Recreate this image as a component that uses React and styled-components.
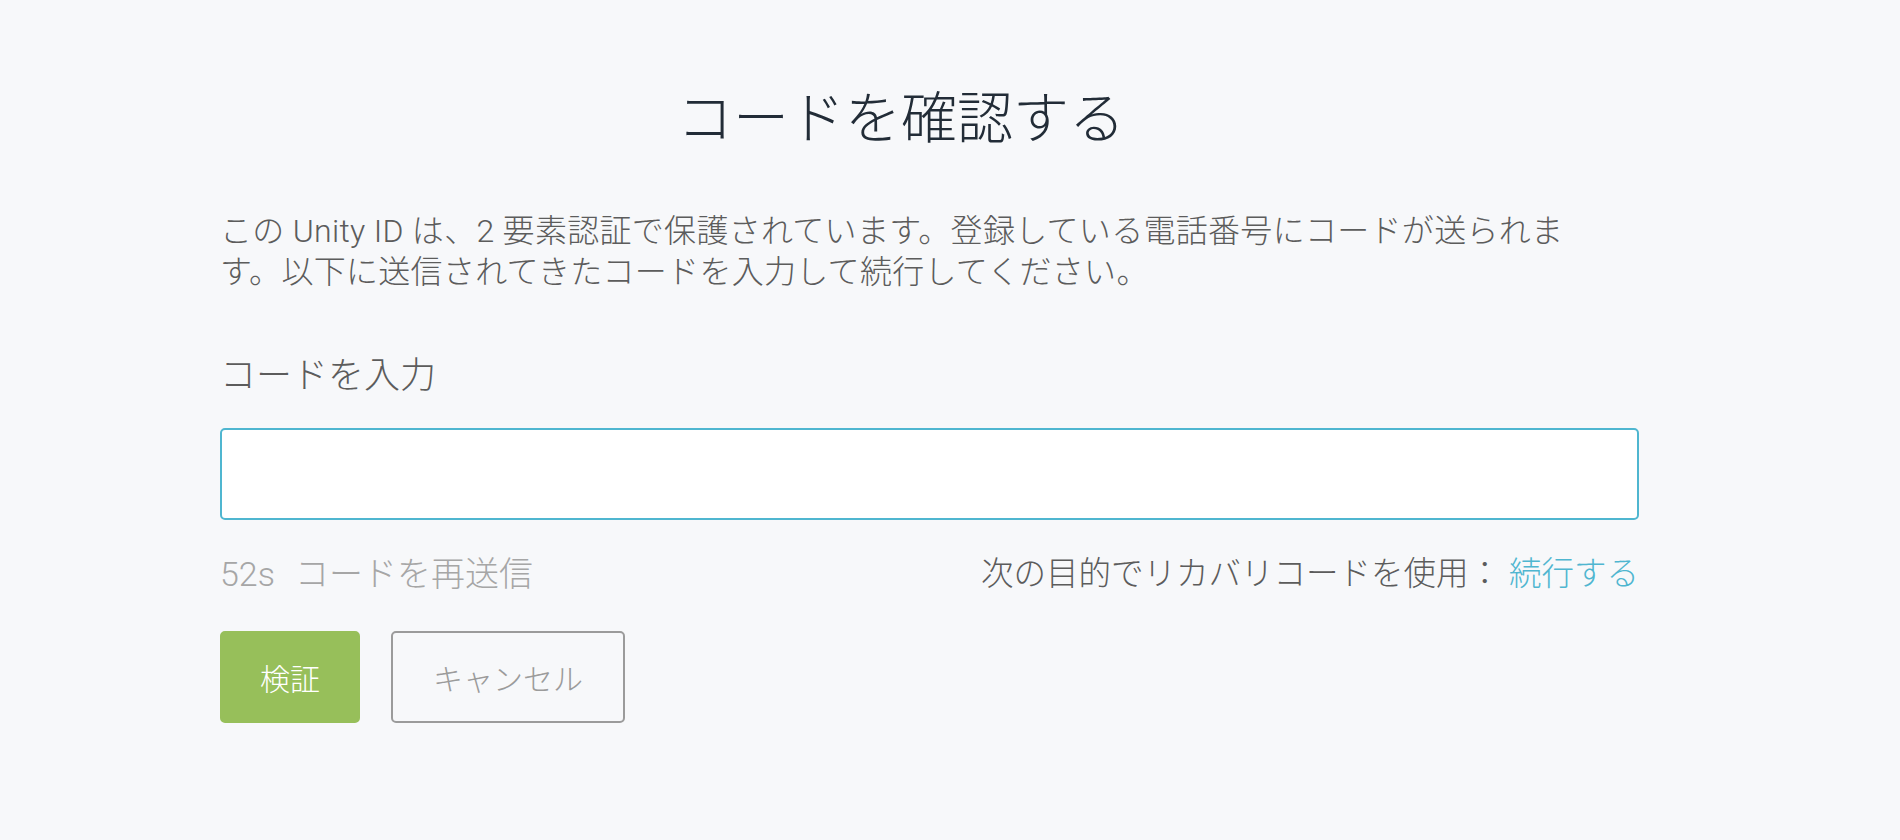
import React, { useState } from "react";
import styled, { createGlobalStyle } from "styled-components";

const GlobalStyle = createGlobalStyle`
  body {
    margin: 0;
    background: #f7f8fa;
    font-family: Roboto, "Noto Sans CJK JP", sans-serif;
  }
`;

const Page = styled.main`
  box-sizing: border-box;
  min-height: 100vh;
  padding: 86px 0 0 220px;
`;

const Card = styled.section`
  width: 1419px;
`;

const Title = styled.h1`
  margin: 0;
  padding-right: 57px;
  font-size: 56px;
  line-height: 67px;
  font-weight: 300;
  color: #222c37;
  text-align: center;
`;

const Intro = styled.p`
  margin: 58px 0 0;
  max-width: 1366px;
  font-size: 32px;
  line-height: 41px;
  letter-spacing: 0.3px;
  font-weight: 300;
  color: #5c5c5c;
`;

const Label = styled.label`
  display: block;
  margin-top: 59px;
  font-size: 36px;
  line-height: 48px;
  font-weight: 300;
  color: #5c5c5c;
`;

const CodeInput = styled.input`
  display: block;
  box-sizing: border-box;
  width: 100%;
  height: 92px;
  margin-top: 28px;
  padding: 0 27px;
  border: 2px solid #4fb6d0;
  border-radius: 5px;
  background: #fff;
  font-family: inherit;
  font-size: 34px;
  color: #333;
  caret-color: #444;
  outline: none;
`;

const HelpRow = styled.div`
  display: flex;
  justify-content: space-between;
  align-items: center;
  margin-top: 32px;
  font-size: 32.5px;
  line-height: 44px;
  font-weight: 300;
`;

const Resend = styled.span`
  display: flex;
  gap: 20px;
  font-size: 34px;
  color: #a6a6a6;
`;

const Recovery = styled.span`
  color: #5c5c5c;
`;

const Link = styled.a`
  color: #4fb6d0;
  text-decoration: none;
  cursor: pointer;
`;

const Actions = styled.div`
  display: flex;
  gap: 31px;
  margin-top: 35px;
`;

const Button = styled.button`
  box-sizing: border-box;
  height: 92px;
  padding: 0 ${props => (props.primary ? "38px" : "40px")};
  border-radius: 5px;
  font-family: inherit;
  font-size: 30px;
  font-weight: 300;
  cursor: pointer;
  border: 2px solid ${props => (props.primary ? "#97bf5a" : "#9b9b9b")};
  background: ${props => (props.primary ? "#97bf5a" : "transparent")};
  color: ${props => (props.primary ? "#fff" : "#9b9b9b")};
`;

const App = () => {
  const [code, setCode] = useState("");

  return (
    <Page>
      <GlobalStyle />
      <Card>
        <Title>コードを確認する</Title>
        <Intro>
          この Unity ID は、2 要素認証で保護されています。登録している電話番号にコードが送られます。以下に送信されてきたコードを入力して続行してください。
        </Intro>
        <Label htmlFor="code">コードを入力</Label>
        <CodeInput
          id="code"
          autoFocus
          value={code}
          onChange={e => setCode(e.target.value)}
        />
        <HelpRow>
          <Resend>
            <span>52s</span>
            <span>コードを再送信</span>
          </Resend>
          <Recovery>
            次の目的でリカバリコードを使用： <Link>続行する</Link>
          </Recovery>
        </HelpRow>
        <Actions>
          <Button primary>検証</Button>
          <Button>キャンセル</Button>
        </Actions>
      </Card>
    </Page>
  );
};

export default App;
